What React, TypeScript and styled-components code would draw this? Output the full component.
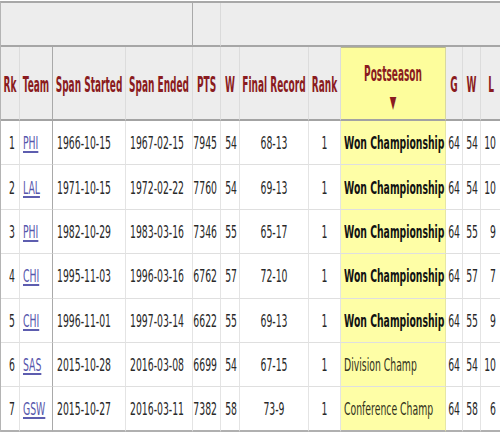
import React from 'react';
import styled, { createGlobalStyle } from 'styled-components';

const Global = createGlobalStyle`
  html, body {
    margin: 0;
    padding: 0;
    background: #ffffff;
    overflow: hidden;
  }
  body {
    font-family: "DejaVu Sans", Verdana, sans-serif;
  }
`;

const Page = styled.div`
  width: 500px;
  height: 440px;
  padding-top: 1px;
  box-sizing: border-box;
  overflow: hidden;
`;

const Table = styled.table`
  border-collapse: separate;
  border-spacing: 0;
  table-layout: fixed;
  width: 502px;
  border-top: 2px solid #a8a8a8;
  border-left: 1px solid #b4b4b4;
  font-size: 9.3px;
  color: #282828;
`;

const Stretch = styled.span<{ $sy: number }>`
  display: inline-block;
  transform: scaleY(${(p) => p.$sy});
  transform-origin: 50% 50%;
  white-space: nowrap;
`;

const OverCell = styled.td<{ $line: 'strong' | 'light' | 'none' }>`
  box-sizing: border-box;
  height: 44px;
  padding: 0;
  background: #ededed;
  border-bottom: 2px solid #a6a6a6;
  border-right: 1px solid
    ${(p) => (p.$line === 'strong' ? '#a9a9a9' : p.$line === 'light' ? '#dadada' : 'transparent')};
`;

const HeadCell = styled.th<{ $sorted?: boolean; $strong?: boolean }>`
  box-sizing: border-box;
  height: 74px;
  padding: ${(p) => (p.$sorted ? '12px 0 0' : '3px 0 0')};
  vertical-align: ${(p) => (p.$sorted ? 'top' : 'middle')};
  text-align: center;
  font-weight: bold;
  font-size: 9px;
  color: #8a1b20;
  background: ${(p) => (p.$sorted ? '#fdfd9c' : '#ededed')};
  border-top: ${(p) => (p.$sorted ? '1px solid #b9b98a' : '0')};
  border-bottom: 2px solid #a3a3a3;
  border-right: 1px solid ${(p) => (p.$strong ? '#a9a9a9' : p.$sorted ? '#d8d8a0' : '#dcdcdc')};
  line-height: 28px;
  overflow: visible;
`;

const SortArrow = styled(Stretch)`
  font-size: 8.5px;
  color: #8a1b20;
`;

const Cell = styled.td<{
  $align: 'left' | 'right' | 'center';
  $pad: string;
  $sorted?: boolean;
  $strong?: boolean;
  $last?: boolean;
}>`
  box-sizing: border-box;
  height: 44.4px;
  padding: ${(p) => p.$pad};
  text-align: ${(p) => p.$align};
  vertical-align: middle;
  white-space: nowrap;
  overflow: visible;
  background: ${(p) => (p.$sorted ? '#fefea6' : '#ffffff')};
  border-right: 1px solid ${(p) => (p.$strong ? '#a9a9a9' : p.$sorted ? '#e6e6a6' : '#e4e4e4')};
  border-bottom: ${(p) => (p.$last ? '2px solid #b0b0b0' : '1px solid #dfdfdf')};
`;

const TeamLink = styled.a`
  color: #5656ac;
  text-decoration: underline;
`;

const Result = styled.span<{ $won: boolean }>`
  font-weight: ${(p) => (p.$won ? 'bold' : 'normal')};
  color: ${(p) => (p.$won ? '#121212' : '#33331c')};
`;

type Align = 'left' | 'right' | 'center';

type Column = {
  key: string;
  label: string;
  width: number;
  align: Align;
  pad: string;
  strong?: boolean;
  sorted?: boolean;
};

const columns: Column[] = [
  { key: 'rk', label: 'Rk', width: 19, align: 'right', pad: '0 4px 0 0' },
  { key: 'team', label: 'Team', width: 33, align: 'left', pad: '0 0 0 3px', strong: true },
  { key: 'start', label: 'Span Started', width: 73, align: 'left', pad: '0 0 0 4px' },
  { key: 'end', label: 'Span Ended', width: 67, align: 'left', pad: '0 0 0 4px' },
  { key: 'pts', label: 'PTS', width: 28, align: 'right', pad: '0 3px 0 0' },
  { key: 'w', label: 'W', width: 19, align: 'right', pad: '0 2px 0 0' },
  { key: 'rec', label: 'Final Record', width: 69, align: 'center', pad: '0' },
  { key: 'rank', label: 'Rank', width: 32, align: 'center', pad: '0' },
  { key: 'post', label: 'Postseason', width: 105, align: 'left', pad: '0 0 0 3px', sorted: true },
  { key: 'g', label: 'G', width: 17, align: 'right', pad: '0 2px 0 0' },
  { key: 'w2', label: 'W', width: 18, align: 'right', pad: '0 2px 0 0' },
  { key: 'l', label: 'L', width: 21, align: 'right', pad: '0 5px 0 0' },
];

type Row = {
  rk: number;
  team: string;
  start: string;
  end: string;
  pts: number;
  w: number;
  rec: string;
  rank: number;
  post: string;
  won: boolean;
  g: number;
  w2: number;
  l: number;
};

const rows: Row[] = [
  { rk: 1, team: 'PHI', start: '1966-10-15', end: '1967-02-15', pts: 7945, w: 54, rec: '68-13', rank: 1, post: 'Won Championship', won: true, g: 64, w2: 54, l: 10 },
  { rk: 2, team: 'LAL', start: '1971-10-15', end: '1972-02-22', pts: 7760, w: 54, rec: '69-13', rank: 1, post: 'Won Championship', won: true, g: 64, w2: 54, l: 10 },
  { rk: 3, team: 'PHI', start: '1982-10-29', end: '1983-03-16', pts: 7346, w: 55, rec: '65-17', rank: 1, post: 'Won Championship', won: true, g: 64, w2: 55, l: 9 },
  { rk: 4, team: 'CHI', start: '1995-11-03', end: '1996-03-16', pts: 6762, w: 57, rec: '72-10', rank: 1, post: 'Won Championship', won: true, g: 64, w2: 57, l: 7 },
  { rk: 5, team: 'CHI', start: '1996-11-01', end: '1997-03-14', pts: 6622, w: 55, rec: '69-13', rank: 1, post: 'Won Championship', won: true, g: 64, w2: 55, l: 9 },
  { rk: 6, team: 'SAS', start: '2015-10-28', end: '2016-03-08', pts: 6699, w: 54, rec: '67-15', rank: 1, post: 'Division Champ', won: false, g: 64, w2: 54, l: 10 },
  { rk: 7, team: 'GSW', start: '2015-10-27', end: '2016-03-11', pts: 7382, w: 58, rec: '73-9', rank: 1, post: 'Conference Champ', won: false, g: 64, w2: 58, l: 6 },
];

const DATA_SY = 1.9;
const HEAD_SY = 2.3;

function renderValue(row: Row, key: string) {
  if (key === 'team') {
    return <TeamLink href="#">{row.team}</TeamLink>;
  }
  if (key === 'post') {
    return <Result $won={row.won}>{row.post}</Result>;
  }
  return String(row[key as keyof Row]);
}

export default function App() {
  return (
    <Page>
      <Global />
      <Table>
        <colgroup>
          {columns.map((c) => (
            <col key={c.key} style={{ width: c.width }} />
          ))}
        </colgroup>
        <thead>
          <tr>
            <OverCell colSpan={4} $line="strong" />
            <OverCell colSpan={1} $line="light" />
            <OverCell colSpan={7} $line="none" />
          </tr>
          <tr>
            {columns.map((c) => (
              <HeadCell key={c.key} $sorted={c.sorted} $strong={c.strong}>
                <Stretch $sy={HEAD_SY}>{c.label}</Stretch>
                {c.sorted && (
                  <>
                    <br />
                    <SortArrow $sy={2}>▼</SortArrow>
                  </>
                )}
              </HeadCell>
            ))}
          </tr>
        </thead>
        <tbody>
          {rows.map((r, i) => (
            <tr key={r.rk}>
              {columns.map((c) => (
                <Cell
                  key={c.key}
                  $align={c.align}
                  $pad={c.pad}
                  $sorted={c.sorted}
                  $strong={c.strong}
                  $last={i === rows.length - 1}
                >
                  <Stretch $sy={DATA_SY}>{renderValue(r, c.key)}</Stretch>
                </Cell>
              ))}
            </tr>
          ))}
        </tbody>
      </Table>
    </Page>
  );
}
